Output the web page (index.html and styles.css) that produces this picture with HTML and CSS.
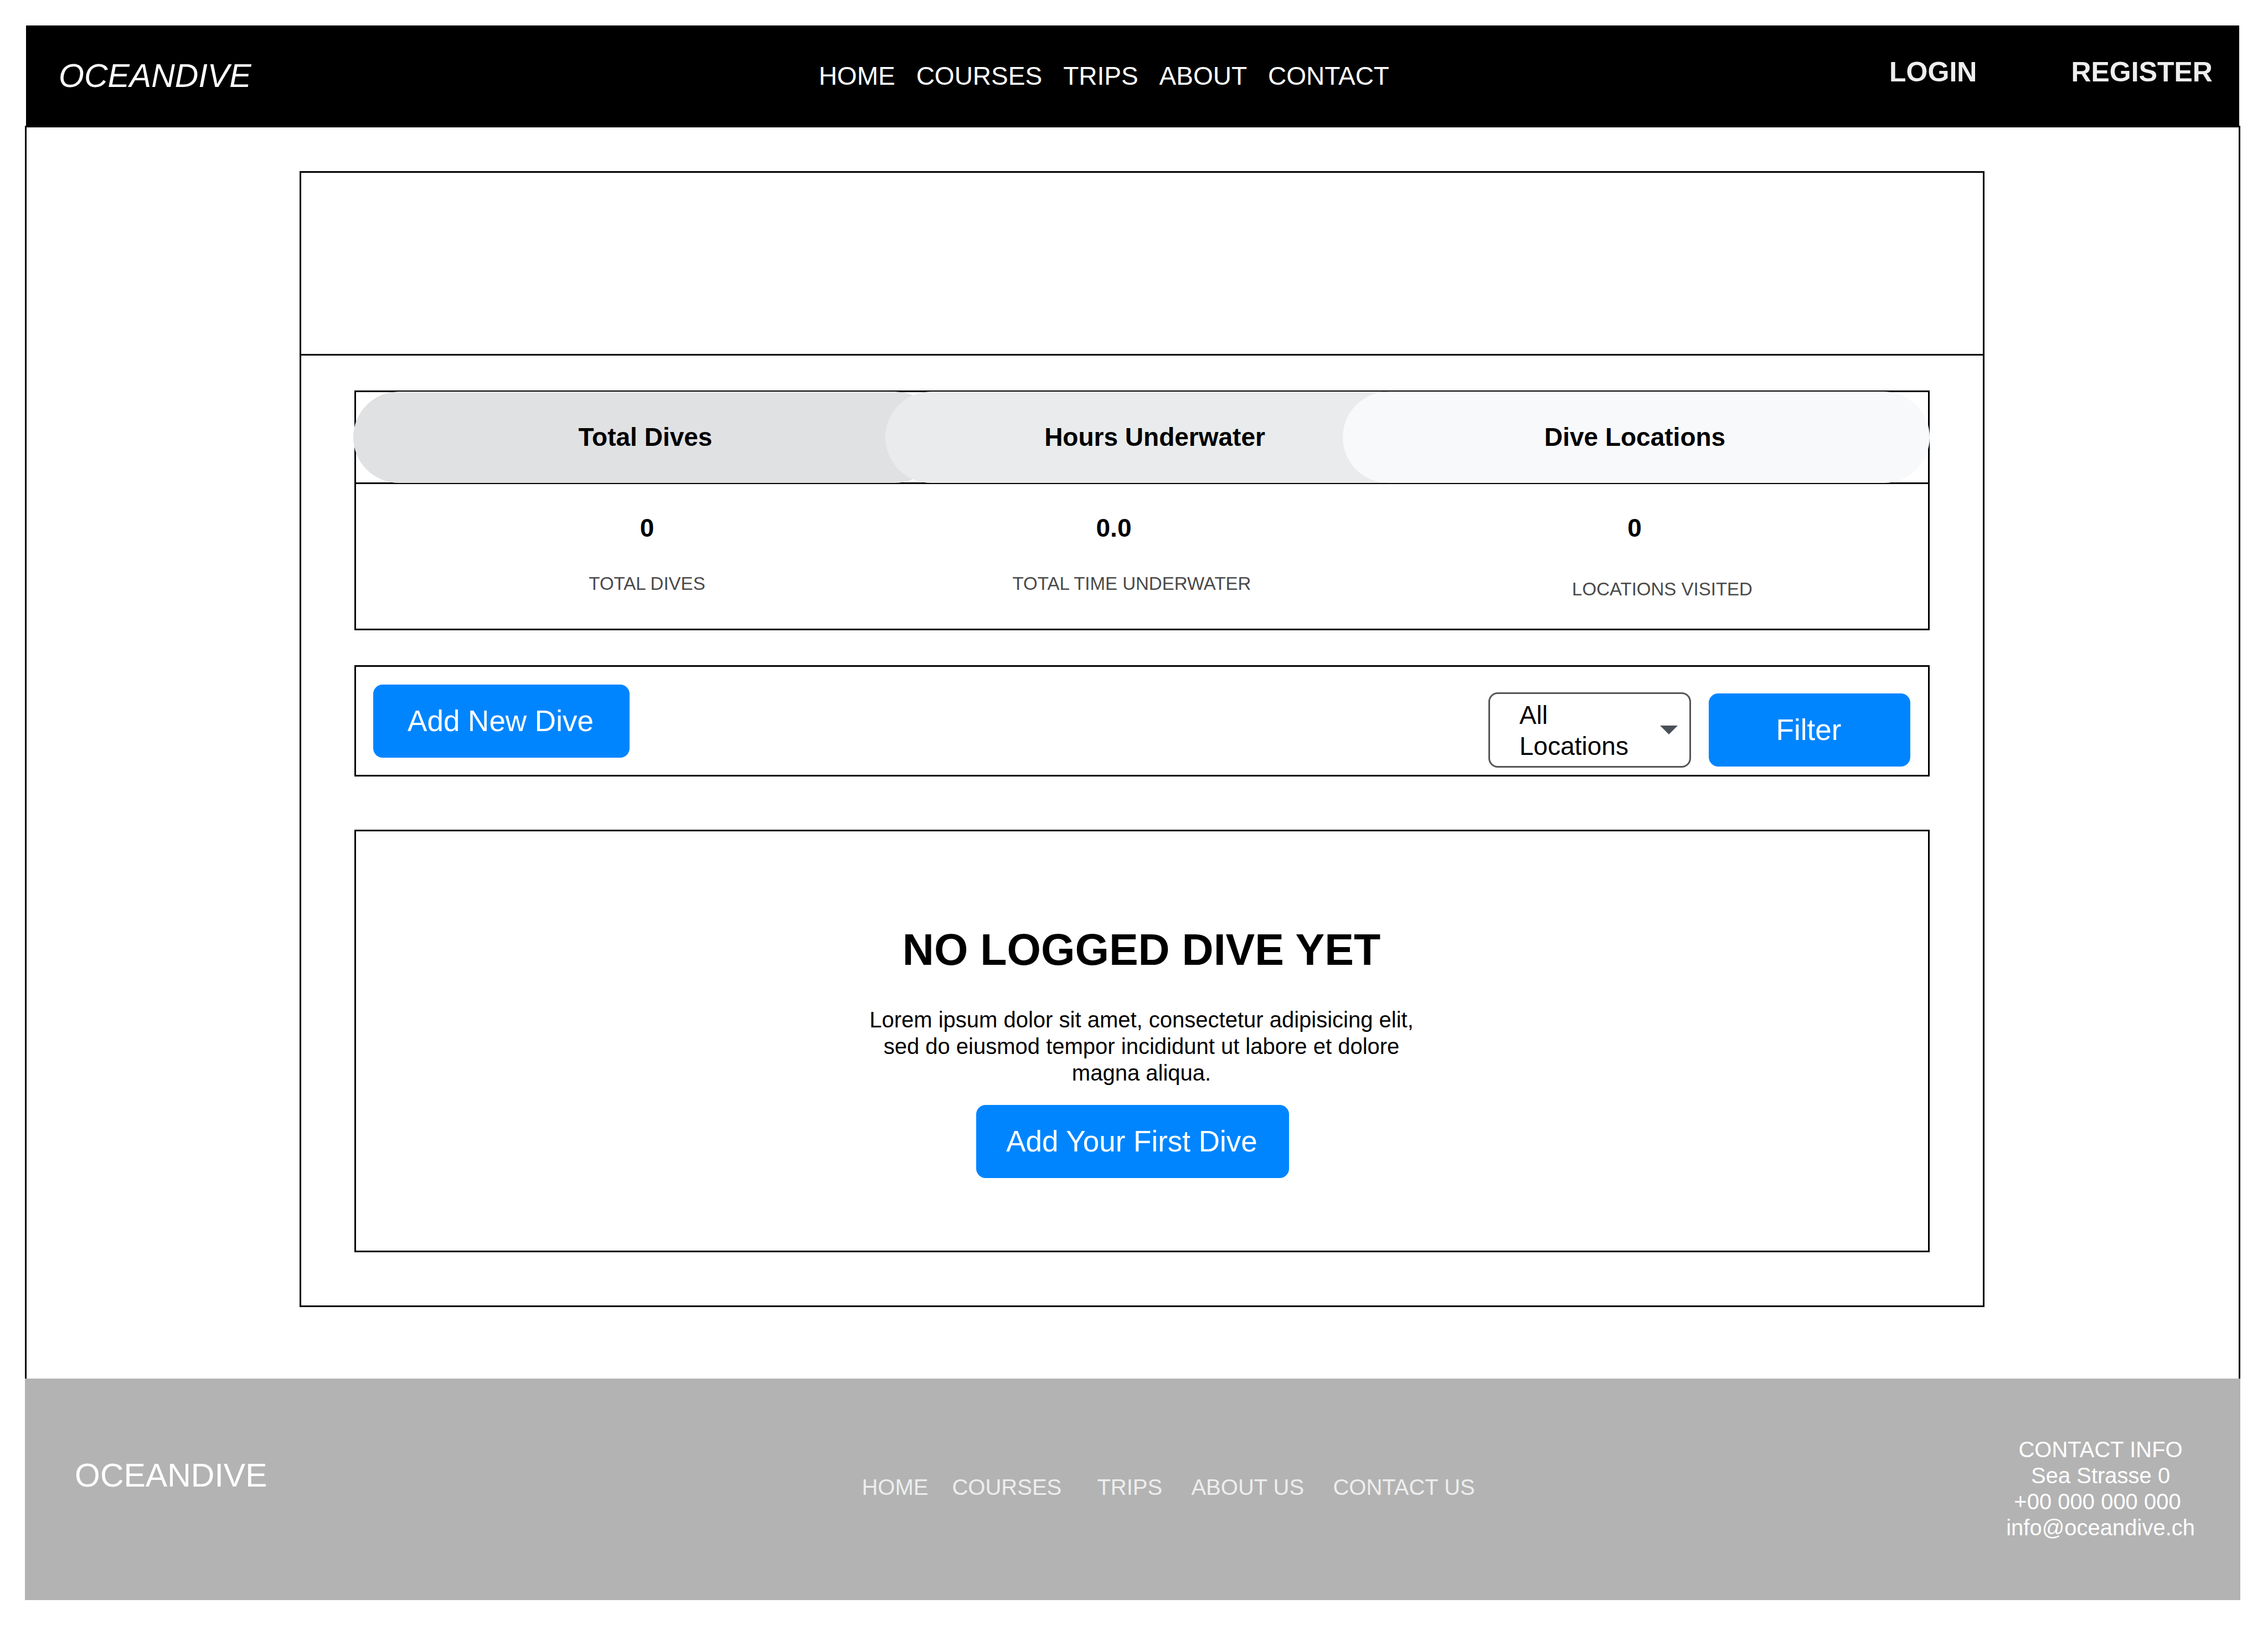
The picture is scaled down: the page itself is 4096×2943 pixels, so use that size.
FILE: index.html
```html
<!DOCTYPE html>
<html lang="en">
<head>
  <meta charset="utf-8">
  <title>Oceandive – Dive Log</title>
  <link rel="stylesheet" href="styles.css">
</head>
<body>
  <div class="page">
    <header class="site-header">
      <a class="logo logo-italic" href="#">OCEANDIVE</a>
      <nav class="main-nav" aria-label="Main">
        <a href="#">HOME</a>
        <a href="#">COURSES</a>
        <a href="#">TRIPS</a>
        <a href="#">ABOUT</a>
        <a href="#">CONTACT</a>
      </nav>
      <div class="account">
        <a href="#">LOGIN</a>
        <a href="#">REGISTER</a>
      </div>
    </header>

    <main class="frame">
      <div class="card">
        <div class="banner"></div>
        <div class="card-body">
          <section class="stats">
            <div class="stats-head">
              <div class="pills">
                <h2 class="pill pill-dives">Total Dives</h2>
                <h2 class="pill pill-hours">Hours Underwater</h2>
                <h2 class="pill pill-places">Dive Locations</h2>
              </div>
            </div>
            <div class="stats-body">
              <div class="values">
                <span>0</span>
                <span>0.0</span>
                <span class="last">0</span>
              </div>
              <div class="labels">
                <span>TOTAL DIVES</span>
                <span>TOTAL TIME UNDERWATER</span>
                <span class="last">LOCATIONS VISITED</span>
              </div>
            </div>
          </section>

          <section class="toolbar">
            <button class="button button-add" type="button">Add New Dive</button>
            <form class="filters">
              <div class="select-box">
                <select class="select" aria-label="Location">
                  <option>All Locations</option>
                </select>
                <svg class="arrow" viewBox="0 0 32 16" aria-hidden="true"><path d="M0 0H32L16 16Z"/></svg>
              </div>
              <button class="button button-filter" type="button">Filter</button>
            </form>
          </section>

          <section class="empty">
            <h1 class="empty-title">NO LOGGED DIVE YET</h1>
            <p class="empty-text">Lorem ipsum dolor sit amet, consectetur adipisicing elit, sed do eiusmod tempor incididunt ut labore et dolore magna aliqua.</p>
            <button class="button button-first" type="button">Add Your First Dive</button>
          </section>
        </div>
      </div>
    </main>

    <footer class="site-footer">
      <a class="logo logo-footer" href="#">OCEANDIVE</a>
      <nav class="footer-nav" aria-label="Footer">
        <a href="#">HOME</a>
        <a href="#">COURSES</a>
        <a href="#">TRIPS</a>
        <a href="#">ABOUT US</a>
        <a href="#">CONTACT US</a>
      </nav>
      <address class="contact">
        CONTACT INFO<br>
        Sea Strasse 0<br>
        +00 000 000 000&nbsp;<br>
        <a href="mailto:info@oceandive.ch">info@oceandive.ch</a>
      </address>
    </footer>
  </div>
</body>
</html>
```

FILE: styles.css
```css
* {
  box-sizing: border-box;
}

body {
  margin: 0;
  background: #fff;
  color: #000;
  font-family: "Liberation Sans", Arial, sans-serif;
}

h1,
h2,
p {
  margin: 0;
}

a {
  color: inherit;
  text-decoration: none;
}

.page {
  padding: 46px 50px 54px 45px;
}

.logo {
  font-size: 59px;
  line-height: 68px;
}

/* Header */

.site-header {
  display: grid;
  grid-template-columns: 1373fr 1933fr 585fr;
  align-items: center;
  min-height: 181px;
  margin: 0 2px;
  padding: 0 48px 0 59px;
  background: #000;
  color: #fff;
}

.logo-italic {
  font-style: italic;
}

.main-nav {
  display: flex;
  gap: 38px;
  font-size: 46px;
  line-height: 60px;
}

.account {
  display: flex;
  justify-content: flex-end;
  gap: 170px;
  padding-bottom: 14px;
  color: #eee;
  font-size: 50px;
  font-weight: bold;
  line-height: 60px;
}

/* Content frame */

.frame {
  padding: 79px 459px 129px 493px;
  border: 3px solid #000;
  border-bottom: 0;
}

.card {
  border: 3px solid #000;
}

.banner {
  height: 330px;
  border-bottom: 3px solid #000;
}

.card-body {
  padding: 63px 96px 96px;
}

/* Statistics */

.stats {
  border: 3px solid #000;
}

.stats-head {
  display: flex;
  border-bottom: 3px solid #000;
}

.pills {
  display: flex;
  flex: 1;
  margin: -1px -3px -1px -5px;
}

.pill {
  padding-right: 5px;
  border-radius: 83px;
  font-size: 46px;
  line-height: 165px;
  text-align: center;
}

.pill-dives {
  flex: 1060 1 0;
  background: #e0e1e3;
}

.pill-hours {
  flex: 978 1 0;
  margin-left: -99px;
  background: #e9ebec;
}

.pill-places {
  flex: 1060 1 0;
  margin-left: -152px;
  background: #f8f9fb;
}

.stats-body {
  display: grid;
  gap: 51px;
  padding: 49px 0 51px;
  text-align: center;
}

.values {
  display: grid;
  grid-template-columns: 1051fr 635fr 93fr 1060fr;
  font-size: 46px;
  font-weight: bold;
  line-height: 60px;
}

.labels {
  display: grid;
  grid-template-columns: 1051fr 700fr 128fr 960fr;
  min-height: 50px;
  color: #4a4a4a;
  font-size: 33px;
  line-height: 40px;
}

.last {
  grid-column: 4;
  align-self: end;
}

/* Buttons and filters */

.button {
  height: 132px;
  padding: 0 3px 0 0;
  border: 0;
  border-radius: 17px;
  background: #0085ff;
  color: #fff;
  font-family: inherit;
  font-size: 53px;
  line-height: 60px;
}

.button-add {
  width: 463px;
}

.button-filter {
  width: 364px;
}

.toolbar {
  display: flex;
  justify-content: space-between;
  align-items: flex-start;
  margin-top: 63px;
  padding: 32px 32px 13px 31px;
  border: 3px solid #000;
}

.filters {
  display: flex;
  align-items: center;
  gap: 32px;
  padding-top: 14px;
}

.select-box {
  position: relative;
}

.select {
  display: block;
  width: 366px;
  height: 136px;
  padding: 10px 80px 10px 53px;
  border: 3px solid #555;
  border-radius: 17px;
  background: #fff;
  color: #000;
  appearance: none;
  font-family: inherit;
  font-size: 46px;
  line-height: 56px;
  white-space: normal;
}

.arrow {
  position: absolute;
  top: 60px;
  right: 24px;
  width: 32px;
  height: 16px;
  fill: #495057;
  pointer-events: none;
}

/* Empty state */

.empty {
  display: flex;
  flex-direction: column;
  align-items: center;
  margin-top: 96px;
  padding: 166px 34px 131px 32px;
  border: 3px solid #000;
}

.empty-title {
  font-size: 79px;
  line-height: 96px;
}

.empty-text {
  max-width: 1000px;
  margin: 54px 0 34px;
  font-size: 40px;
  line-height: 48px;
  text-align: center;
}

.button-first {
  width: 565px;
  margin-right: 32px;
}

/* Footer */

.site-footer {
  display: grid;
  grid-template-columns: 1423fr 2069fr auto;
  align-items: center;
  padding: 105px 82px 107px 90px;
  background: #b3b3b3;
  color: #fff;
}

.logo-footer {
  padding-bottom: 48px;
}

.footer-nav {
  display: grid;
  grid-template-columns: 163px 262px 170px 256px auto;
  justify-content: start;
  padding-bottom: 6px;
  color: #eee;
  font-size: 40px;
  line-height: 48px;
}

.contact {
  font-size: 40px;
  font-style: normal;
  line-height: 47px;
  text-align: center;
}
```
